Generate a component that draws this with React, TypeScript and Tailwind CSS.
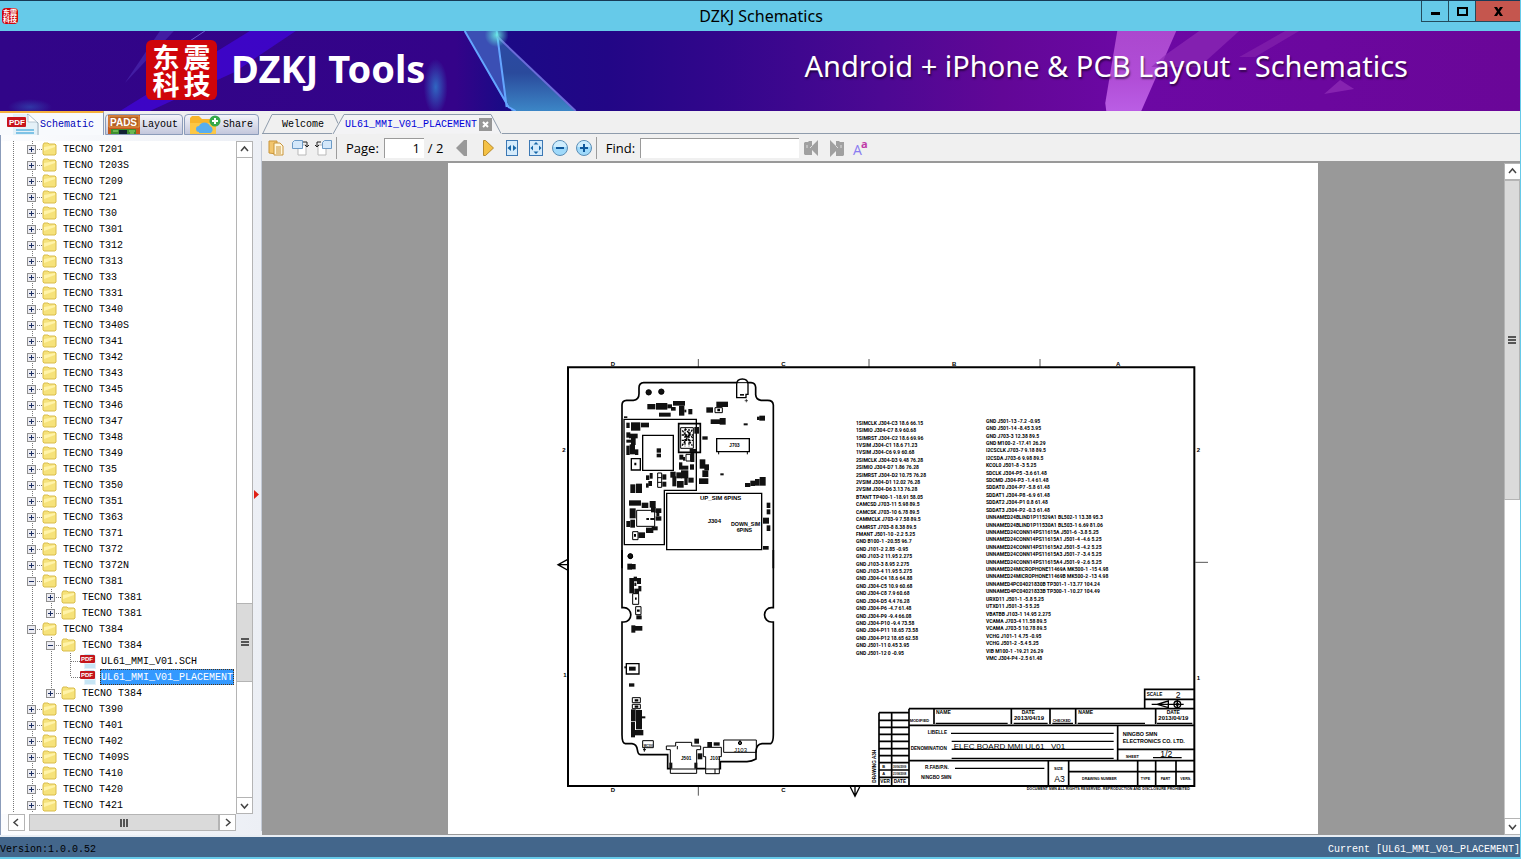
import { FC, ReactNode, useState } from 'react';
import clsx from 'clsx';

type Guide = 'blank' | 'line' | 'tee' | 'end' | 'plus' | 'plusEnd' | 'minus';

interface TreeRow {
  label: string;
  guides: Guide[];
  file?: boolean;
}

const folder = (label: string): TreeRow => ({ label: `TECNO ${label}`, guides: ['line', 'plus'] });

const rows: TreeRow[] = [
  ...[
    'T201', 'T203S', 'T209', 'T21', 'T30', 'T301', 'T312', 'T313', 'T33', 'T331', 'T340', 'T340S', 'T341', 'T342',
    'T343', 'T345', 'T346', 'T347', 'T348', 'T349', 'T35', 'T350', 'T351', 'T363', 'T371', 'T372', 'T372N',
  ].map(folder),
  { label: 'TECNO T381', guides: ['line', 'minus'] },
  { label: 'TECNO T381', guides: ['line', 'line', 'plus'] },
  { label: 'TECNO T381', guides: ['line', 'line', 'plusEnd'] },
  { label: 'TECNO T384', guides: ['line', 'minus'] },
  { label: 'TECNO T384', guides: ['line', 'line', 'minus'] },
  { label: 'UL61_MMI_V01.SCH', guides: ['line', 'line', 'line', 'tee'], file: true },
  { label: 'UL61_MMI_V01_PLACEMENT', guides: ['line', 'line', 'line', 'end'], file: true },
  { label: 'TECNO T384', guides: ['line', 'line', 'plusEnd'] },
  ...['T390', 'T401', 'T402', 'T409S', 'T410', 'T420', 'T421'].map(folder),
];

const netsLeft = [
  '1SIMCLK J304-C3 18.6 66.15', '1SIMIO J304-C7 8.9 60.68', '1SIMRST J304-C2 18.6 69.96', '1VSIM J304-C1 18.6 71.23',
  '1VSIM J304-C6 9.9 60.68', '2SIMCLK J304-D3 9.48 76.28', '2SIMIO J304-D7 1.86 76.28', '2SIMRST J304-D2 10.75 76.28',
  '2VSIM J304-D1 12.02 76.28', '2VSIM J304-D6 3.13 76.28', 'BTANT TP400-1 -18.91 58.05', 'CAMCSD J703-11 5.98 89.5',
  'CAMCSK J703-10 6.78 89.5', 'CAMMCLK J703-9 7.58 89.5', 'CAMRST J703-8 8.38 89.5', 'FMANT J501-10 -2.2 5.25',
  'GND B100-1 -20.55 96.7', 'GND J101-2 2.85 -0.95', 'GND J103-2 11.95 2.275', 'GND J103-3 8.95 2.275',
  'GND J103-4 11.95 5.275', 'GND J304-C4 18.6 64.88', 'GND J304-C5 10.9 60.68', 'GND J304-C8 7.9 60.68',
  'GND J304-D5 4.4 76.28', 'GND J304-P6 -4.7 61.48', 'GND J304-P9 -9.4 66.08', 'GND J304-P10 -9.4 73.58',
  'GND J304-P11 18.65 73.58', 'GND J304-P12 18.65 62.58', 'GND J501-11 0.45 3.95', 'GND J501-12 0 -0.95',
];

const netsRight = [
  'GND J501-13 -7.2 -0.95', 'GND J501-14 -8.45 3.95', 'GND J703-3 12.38 89.5', 'GND M100-2 -17.41 26.29',
  'I2CSCLK J703-7 9.18 89.5', 'I2CSDA J703-6 9.98 89.5', 'KCOL0 J501-8 -3 5.25', 'SDCLK J304-P5 -3.6 61.48',
  'SDCMD J304-P3 -1.4 61.48', 'SDDAT0 J304-P7 -5.8 61.48', 'SDDAT1 J304-P8 -6.9 61.48', 'SDDAT2 J304-P1 0.8 61.48',
  'SDDAT3 J304-P2 -0.3 61.48', 'UNNAMED24BLIND1P11529A1 BL502-1 13.38 95.3', 'UNNAMED24BLIND1P11530A1 BL503-1 6.69 81.06',
  'UNNAMED24CONN14PS11615A J501-6 -3.8 5.25', 'UNNAMED24CONN14PS11615A1 J501-4 -4.6 5.25',
  'UNNAMED24CONN14PS11615A2 J501-5 -4.2 5.25', 'UNNAMED24CONN14PS11615A3 J501-7 -3.4 5.25',
  'UNNAMED24CONN14PS11615A4 J501-9 -2.6 5.25', 'UNNAMED24MICROPHONE11469A MK500-1 -15 4.98',
  'UNNAMED24MICROPHONE11469B MK500-2 -13 4.98', 'UNNAMED4PC04021830B TP301-1 -13.77 104.24',
  'UNNAMED4PC04021833B TP300-1 -10.27 104.49', 'URXD11 J501-1 -5.8 5.25', 'UTXD11 J501-3 -5 5.25',
  'VBATBB J103-1 14.95 2.275', 'VCAMA J703-4 11.58 89.5', 'VCAMA J703-5 10.78 89.5', 'VCHG J101-1 4.75 -0.95',
  'VCHG J501-2 -5.4 5.25', 'VIB M100-1 -19.21 26.29', 'VMC J304-P4 -2.5 61.48',
];

// solid parts on the upper half of the board: x, y, width, height
const upperParts = [
  [277, 147, 24, 16], [303, 144, 34, 20], [337, 148, 14, 12], [354, 138, 36, 14], [348, 156, 14, 11], [372, 152, 16, 30],
  [388, 164, 6, 8], [400, 162, 12, 16], [312, 173, 35, 12], [454, 157, 20, 16], [484, 140, 35, 16], [467, 193, 30, 14],
  [494, 189, 18, 20], [566, 205, 12, 6], [606, 185, 8, 10], [613, 182, 17, 15], [207, 184, 10, 5],
  [214, 203, 10, 16], [228, 202, 28, 25], [258, 203, 24, 14], [214, 232, 12, 16], [222, 236, 26, 14], [228, 248, 14, 22],
  [214, 254, 18, 9], [224, 268, 16, 30], [240, 283, 10, 17], [214, 272, 10, 28],
  [442, 244, 16, 10], [305, 280, 13, 13], [305, 296, 13, 11], [418, 216, 14, 20], [404, 282, 20, 10],
  [373, 299, 12, 15], [384, 306, 6, 11], [406, 294, 12, 27], [434, 313, 17, 28], [448, 328, 14, 18], [442, 346, 18, 20],
  [432, 370, 28, 17], [405, 328, 12, 16], [372, 322, 10, 22], [380, 332, 20, 12], [346, 350, 16, 18], [352, 364, 12, 30],
  [364, 352, 16, 18], [378, 346, 22, 24], [388, 366, 10, 24], [400, 368, 16, 15], [366, 378, 20, 20], [496, 355, 10, 6],
  [284, 354, 9, 17], [273, 361, 10, 14], [280, 378, 11, 15], [273, 385, 8, 13], [322, 358, 12, 16], [322, 380, 12, 15],
  [226, 388, 15, 26], [243, 386, 18, 28], [222, 436, 36, 16], [284, 438, 18, 20], [260, 443, 20, 16], [288, 456, 14, 16],
  [224, 460, 18, 30], [302, 460, 17, 14], [304, 472, 9, 12], [302, 484, 17, 13], [214, 498, 12, 18], [226, 494, 14, 24],
  [273, 518, 22, 16], [290, 514, 18, 12], [250, 532, 20, 17], [274, 489, 8, 6], [286, 489, 12, 6],
  [570, 384, 16, 12], [586, 377, 14, 16], [600, 372, 14, 20], [614, 366, 18, 26],
  [635, 443, 11, 16], [635, 463, 11, 15], [624, 488, 18, 18], [635, 511, 11, 17], [624, 573, 17, 11], [555, 117, 12, 5],
];

// solid parts down the left edge of the lower half
const lowerParts = [
  [217, 41, 14, 18], [230, 42, 12, 16], [223, 84, 14, 46], [236, 80, 10, 14], [246, 84, 12, 12], [238, 116, 14, 16],
  [246, 92, 12, 10], [238, 98, 6, 10], [250, 108, 9, 16], [244, 196, 16, 12], [229, 226, 12, 22], [240, 228, 22, 14],
  [222, 350, 20, 12], [222, 400, 16, 10], [228, 478, 14, 36], [243, 480, 18, 58], [228, 516, 12, 46], [238, 540, 27, 16],
  [260, 499, 11, 6], [418, 566, 14, 15], [457, 576, 14, 15], [476, 577, 18, 10], [428, 610, 14, 18], [343, 638, 9, 18],
  [418, 638, 9, 18], [208, 349, 6, 6],
];

const FolderIcon: FC = () => (
  <svg width="15" height="14" viewBox="0 0 15 14" className="shrink-0">
    <path d="M1 3l1-2h4l1 1h6l1 1v9l-1 1H2l-1-1z" fill="#f6e27a" stroke="#d9bd4c" strokeWidth="1" />
    <path d="M2 5l6-1 5-1v2L2 9z" fill="#fff3a8" />
  </svg>
);

const PdfIcon: FC = () => (
  <svg width="17" height="16" viewBox="0 0 17 16" className="shrink-0">
    <path d="M4 1h9l3 2v13H4z" fill="#e3f1fa" />
    <path d="M5 12h10M5 14h10M5 2h9" stroke="#a9d8ee" />
    <rect x="0" y="2" width="15" height="8" rx="1" fill="#c4161c" />
    <text x="1" y="8" fontSize="6" fontWeight="bold" fontFamily="Liberation Sans, sans-serif" fill="#fff">PDF</text>
  </svg>
);

const GuideCell: FC<{ kind: Guide }> = ({ kind }) => {
  const box = kind === 'plus' || kind === 'plusEnd' || kind === 'minus';
  const half = kind === 'end' || kind === 'plusEnd';
  return (
    <svg width="19" height="16" viewBox="0 0 19 16" className="shrink-0" shapeRendering="crispEdges">
      {kind !== 'blank' && (
        <path d={half ? 'M9.5 0V8' : 'M9.5 0V16'} stroke="#777" strokeDasharray="1 1" />
      )}
      {kind !== 'line' && kind !== 'blank' && <path d="M10 8.5H19" stroke="#777" strokeDasharray="1 1" />}
      {box && (
        <>
          <rect x="4.5" y="4.5" width="8" height="8" fill="#ececf2" stroke="#8f8f8f" />
          <path d={kind === 'minus' ? 'M6 8.5h5' : 'M6 8.5h5M8.5 6v5'} stroke="#1c2f63" />
        </>
      )}
    </svg>
  );
};

const Arrow: FC<{ d: string }> = ({ d }) => (
  <svg width="9" height="9" viewBox="0 0 9 9" fill="none" stroke="#444" strokeWidth="1.5">
    <path d={d} />
  </svg>
);

const ScrollButton: FC<{ label: string; d: string }> = ({ label, d }) => (
  <button aria-label={label} className="flex size-[17px] shrink-0 items-center justify-center border border-[#b4b4b4] bg-white">
    <Arrow d={d} />
  </button>
);

const UP = 'M1 6l3.500-4L8 6';
const DOWN = 'M1 3l3.500 4L8 3';
const LEFT = 'M6 1L2 4.500 6 8';
const RIGHT = 'M3 1l4 3.500L3 8';

const Grip: FC<{ vertical?: boolean }> = ({ vertical }) => (
  <svg width="8" height="8" viewBox="0 0 8 8" fill="#555" shapeRendering="crispEdges">
    <path d={vertical ? 'M0 0h8v2H0zM0 3h8v2H0zM0 6h8v2H0z' : 'M0 0h2v8H0zM3 0h2v8H3zM6 0h2v8H6z'} />
  </svg>
);

const ToolButton: FC<{ label: string; children: ReactNode }> = ({ label, children }) => (
  <button aria-label={label} className="flex w-6 shrink-0 items-center justify-center">
    <svg width="18" height="18" viewBox="0 0 18 18" fill="none" className="overflow-visible">
      {children}
    </svg>
  </button>
);

const TitleBar: FC = () => (
  <header className="flex h-[31px] shrink-0 border-t border-[#173a56] bg-[#66cae9]">
    <div className="flex flex-1 items-center pl-0.5">
      <div className="flex size-4 flex-col items-center justify-center rounded-sm bg-[#d0050b] font-['Noto_Sans_CJK_SC',sans-serif] text-[7px] leading-[7px] font-bold text-white">
        <span>东震</span>
        <span>科技</span>
      </div>
    </div>
    <h1 className="self-center font-['Noto_Sans',sans-serif] text-base text-black">DZKJ Schematics</h1>
    <div className="flex flex-1 items-start justify-end">
      <button aria-label="Minimize" className="flex h-[21px] w-7 items-center justify-center border border-t-0 border-[#234a5c]">
        <svg width="11" height="10" viewBox="0 0 11 10"><path d="M1 6h9v3H1z" /></svg>
      </button>
      <button aria-label="Maximize" className="flex h-[21px] w-[27px] items-center justify-center border-r border-b border-[#234a5c]">
        <svg width="11" height="9" viewBox="0 0 11 9"><path d="M1 1h9v7H1z" fill="none" stroke="#000" strokeWidth="2" /></svg>
      </button>
      <button aria-label="Close" className="flex h-[21px] w-11 items-center justify-center border-b border-[#234a5c] bg-[#c5564e]">
        <svg width="9" height="9" viewBox="0 0 9 9"><path d="M0 0h3l1.500 2.500L6 0h3L6 4.500 9 9H6L4.500 6.500 3 9H0l3-4.500z" /></svg>
      </button>
    </div>
  </header>
);

const Banner: FC = () => (
  <div className="relative flex h-20 shrink-0 items-center overflow-hidden bg-[#310489]">
    <svg className="absolute inset-0 size-full" viewBox="0 0 1521 80" preserveAspectRatio="none">
      <defs>
        <linearGradient id="sky">
          <stop offset="0" stopColor="#310588" />
          <stop offset=".3" stopColor="#340389" />
          <stop offset=".33" stopColor="#1b0a86" />
          <stop offset=".4" stopColor="#220686" />
          <stop offset=".47" stopColor="#31068b" />
          <stop offset=".58" stopColor="#4c0893" />
          <stop offset=".66" stopColor="#620797" />
          <stop offset=".74" stopColor="#6c08a4" />
          <stop offset="1" stopColor="#6a0698" />
        </linearGradient>
        <linearGradient id="shard" x1="0" y1="0" x2="0" y2="1">
          <stop offset="0" stopColor="#2c4aa6" />
          <stop offset=".5" stopColor="#2a4a9c" />
          <stop offset="1" stopColor="#3c86c6" />
        </linearGradient>
        <linearGradient id="ray" x1="0" y1="0" x2="0" y2="1">
          <stop offset="0" stopColor="#b653d6" />
          <stop offset=".6" stopColor="#bd5ae0" />
          <stop offset="1" stopColor="#c86df0" />
        </linearGradient>
        <radialGradient id="glow">
          <stop offset="0" stopColor="#2f7fd0" stopOpacity=".8" />
          <stop offset="1" stopColor="#2f7fd0" stopOpacity="0" />
        </radialGradient>
        <radialGradient id="spark">
          <stop offset="0" stopColor="#6df0e4" stopOpacity=".9" />
          <stop offset="1" stopColor="#5be0dd" stopOpacity="0" />
        </radialGradient>
      </defs>
      <path d="M0 0h1521v80H0z" fill="url(#sky)" />
      <path d="M250 0h46L235 41 150 80h-30z" fill="#4206e0" opacity=".7" />
      <path d="M160 0h14L125 52z" fill="#5236bd" opacity=".5" />
      <path d="M205 0L178 18" stroke="#6a55cf" />
      <ellipse cx="436" cy="56" rx="12" ry="28" fill="url(#glow)" />
      <ellipse cx="30" cy="76" rx="22" ry="8" fill="url(#glow)" opacity=".5" />
      <path d="M465 0h32l12 78z" fill="#3b4fb4" />
      <path d="M497 4l79 76h-64l-6-12z" fill="url(#shard)" />
      <path d="M465 0l44 76 7 4M497 0l10 76" fill="none" stroke="#64a5ff" strokeWidth="2" />
      <path d="M497 5l79 75" stroke="#6a6bd8" strokeWidth="2" />
      <circle cx="497" cy="4" r="12" fill="url(#spark)" />
      <path d="M1118 0h59l-35 80h-35l-1-8z" fill="url(#ray)" opacity=".85" />
      <path d="M1200 0h40l-40 36h-48l14-12z" fill="#8d2bb6" opacity=".7" />
      <path d="M1286 0h14l-44 26h-16z" fill="#8322ad" opacity=".7" />
      <path d="M1341 49l14 9-30 5z" fill="#9837bd" opacity=".6" />
    </svg>
    <div className="relative flex flex-1 items-center justify-between pr-28 pb-0.5 pl-[146px]">
      <div className="flex items-center">
        <div className="flex h-[60px] w-[71px] flex-col items-center justify-center rounded-md bg-[#cf050a] font-['Noto_Sans_CJK_SC',sans-serif] text-[27px] leading-[27px] font-bold text-white">
          <div className="flex gap-1">
            <span>东</span>
            <span>震</span>
          </div>
          <div className="flex gap-1">
            <span>科</span>
            <span>技</span>
          </div>
        </div>
        <span className="ml-3.5 pb-1 font-['Noto_Sans',sans-serif] text-[38px] leading-[54px] font-bold text-white">DZKJ Tools</span>
      </div>
      <span className="pb-2 font-['Noto_Sans',sans-serif] text-[29px] text-white [text-shadow:1px_2px_2px_#0008]">
        Android + iPhone &amp; PCB Layout - Schematics
      </span>
    </div>
  </div>
);

const SideTabs: FC = () => {
  const tab = 'flex h-[21px] items-center overflow-hidden rounded-t-sm border border-[#8b9cba] bg-linear-to-b from-[#f4f5fa] to-[#c3c7dc]';
  return (
    <div className="flex items-end gap-px">
      <button className="flex h-6 w-[104px] items-center overflow-hidden border-t-2 border-r border-t-[#f5b03c] border-r-[#8b9cba] bg-[#f8fafd] pl-1.5 text-[#0000b8]">
        <svg width="34" height="22" viewBox="0 0 34 22" className="shrink-0">
          <path d="M7 1h16l8 9v12H7z" fill="#e4f1f8" />
          <path d="M21 1l11 9v12" fill="none" stroke="#8aa5b5" />
          <path d="M22 1v8h9z" fill="#fff" stroke="#b8c8d2" />
          <path d="M10 17h18M10 20h18" stroke="#7fc3e6" strokeWidth="2" />
          <rect x="1" y="4" width="19" height="10" rx="1" fill="#c8141b" />
          <text x="3" y="12" fontSize="8" fontWeight="bold" fontFamily="Liberation Sans, sans-serif" fill="#fff">PDF</text>
        </svg>
        Schematic
      </button>
      <button className={clsx(tab, 'w-[78px] gap-0.5 pl-0.5')}>
        <svg width="32" height="20" viewBox="0 0 32 20" className="shrink-0">
          <path d="M0 0h32v20H0z" fill="#c55a1e" />
          <path d="M1 1h30v11H1z" fill="#b55f22" stroke="#e59a4f" />
          <text x="2" y="11" fontSize="10" fontWeight="bold" fontFamily="Liberation Sans, sans-serif" fill="#fff">PADS</text>
          <path d="M3 14h25v6H3z" fill="#3d8f2c" />
          <path d="M11 15h8v5h-8z" fill="#123" />
          <path d="M5 16h5M21 16h6M22 18h4" stroke="#9be07d" />
        </svg>
        Layout
      </button>
      <button className={clsx(tab, 'w-[75px] gap-0.5 pl-1')}>
        <svg width="32" height="20" viewBox="0 0 32 20" className="shrink-0">
          <path d="M1 3l2-2h7l3 3h13v16H1z" fill="#f7b52b" />
          <path d="M1 8h26v12H1z" fill="#fcc744" />
          <path d="M10 17a3 3 0 010-6 6 6 0 0111 0 4 4 0 011 7H10z" fill="#57aef0" />
          <circle cx="26" cy="6" r="5.500" fill="#35a94a" />
          <path d="M26 3v6M23 6h6" stroke="#fff" strokeWidth="2" />
        </svg>
        Share
      </button>
    </div>
  );
};

const FileTree: FC = () => {
  const [selected, setSelected] = useState('UL61_MMI_V01_PLACEMENT');
  return (
    <ul className="min-h-0 flex-1 overflow-hidden bg-white">
      {rows.map((row, i) => (
        <li key={i}>
          <button onClick={() => setSelected(row.label)} className="flex h-4 items-center pl-[3px] whitespace-nowrap">
            {row.guides.map((kind, n) => (
              <GuideCell key={n} kind={kind} />
            ))}
            {row.file ? <PdfIcon /> : <FolderIcon />}
            <span
              className={clsx(
                'h-4 px-px pt-px leading-4',
                row.file ? 'ml-[3px]' : 'ml-[5px]',
                row.label === selected && 'bg-[#3399ff] text-white outline-1 -outline-offset-1 outline-dotted outline-[#553311]',
              )}
            >
              {row.label}
            </span>
          </button>
        </li>
      ))}
    </ul>
  );
};

const Sidebar: FC = () => (
  <aside className="flex w-[262px] shrink-0 flex-col bg-[#f0f0f0]">
    <SideTabs />
    <div className="flex min-h-0 flex-1 border-l border-[#8b9cba] bg-linear-to-r from-[#fbfcfe] to-[#eceff5] pt-1.5 pb-1">
      <div className="flex min-w-0 flex-1 flex-col">
        <FileTree />
        <div className="ml-[7px] flex h-[17px] bg-white">
          <ScrollButton label="Scroll left" d={LEFT} />
          <div className="ml-1 flex flex-1 items-center justify-center border border-[#b4b4b4] bg-[#dadada]">
            <Grip />
          </div>
          <ScrollButton label="Scroll right" d={RIGHT} />
        </div>
      </div>
      <div className="mb-[17px] flex w-[17px] flex-col bg-white">
        <ScrollButton label="Scroll up" d={UP} />
        <div className="grow-[448] basis-0 border-x border-[#b4b4b4]" />
        <div className="flex grow-[77] basis-0 items-center justify-center border border-[#b4b4b4] bg-[#dadada]">
          <Grip vertical />
        </div>
        <div className="grow-[116] basis-0 border-x border-[#b4b4b4]" />
        <ScrollButton label="Scroll down" d={DOWN} />
      </div>
      <div className="flex w-[9px] items-center border-r border-[#c3cad6] pt-4 pl-px">
        <svg width="5" height="9" viewBox="0 0 5 9"><path d="M0 0l5 4.500L0 9z" fill="#e02015" /></svg>
      </div>
    </div>
  </aside>
);

const DocTabs: FC = () => (
  <div className="flex h-[23px] shrink-0 items-end">
    <button className="relative flex h-5 w-[70px] items-center border-b border-[#8f9cac] pl-5 text-black">
      <svg className="absolute inset-0" width="78" height="20" viewBox="0 0 78 20" fill="none" stroke="#8f9cac">
        <path d="M1 19L10 .5h62l4 9" />
      </svg>
      <span className="relative pt-px">Welcome</span>
    </button>
    <div className="relative flex h-5 w-[170px] items-center pl-[13px]">
      <svg className="absolute inset-0" width="170" height="20" viewBox="0 0 170 20" fill="#f3f3f5" stroke="#8f9cac">
        <path d="M1 20L12 .5h147l10 19" />
      </svg>
      <button className="relative pt-px text-[#0000d8]">UL61_MMI_V01_PLACEMENT</button>
      <button aria-label="Close tab" className="relative ml-0.5 flex size-[13px] items-center justify-center bg-[#969696]">
        <svg width="7" height="7" viewBox="0 0 7 7" stroke="#fff" strokeWidth="2"><path d="M1 1l5 5M6 1L1 6" /></svg>
      </button>
    </div>
    <div className="h-full flex-1 border-b border-[#8f9cac]" />
  </div>
);

const Toolbar: FC = () => (
  <div className="flex h-[29px] shrink-0 items-center border-b-2 border-[#999] pl-0.5 font-['Open_Sans',sans-serif] text-[13px] text-black">
    <ToolButton label="Copy page">
      <path d="M2 2h8v13l-8-1z" fill="#f2c56c" stroke="#c9953a" />
      <path d="M7 4h6l3 3v9H7z" fill="#fff7dd" stroke="#c9953a" />
      <path d="M9 8h5M9 10h5M9 12h5M9 14h5" stroke="#c9953a" />
    </ToolButton>
    <ToolButton label="Rotate left">
      <path d="M7 6h8v10H7z" fill="#fff" stroke="#b9b9b9" />
      <path d="M1.500 3.500l2-2h8v8h-10z" fill="#d4e8fa" stroke="#6d9bc6" />
      <path d="M12 3h4v5M14 6l2 2 2-2" stroke="#222" />
    </ToolButton>
    <ToolButton label="Rotate right">
      <path d="M3 6h8v10H3z" fill="#fff" stroke="#b9b9b9" />
      <path d="M7.500 3.500l2-2h7v8h-9z" fill="#d4e8fa" stroke="#6d9bc6" />
      <path d="M6 3H2v5M0 6l2 2 2-2" stroke="#222" />
    </ToolButton>
    <div className="h-[22px] w-px bg-[#9c9c9c]" />
    <label htmlFor="page" className="ml-[9px] pt-0.5">Page:</label>
    <input
      id="page"
      defaultValue="1"
      className="ml-[5px] h-5 w-10 border-t border-l border-[#9a9a9a] bg-white pr-1 text-right outline-none"
    />
    <span className="ml-1 w-[22px] pt-0.5 whitespace-nowrap">/ 2</span>
    <ToolButton label="Previous page">
      <path d="M14 1v16h-3L3 9l8-8z" fill="#999" />
    </ToolButton>
    <div className="w-0.5" />
    <ToolButton label="Next page">
      <path d="M4.500 1.500v15h2l8-7.500-8-7.500z" fill="#f4c145" stroke="#b78a2c" />
    </ToolButton>
    <ToolButton label="Fit width">
      <rect x="3.500" y="1.500" width="11" height="15" fill="#d5ebfb" stroke="#3c78b4" />
      <path d="M8 6v6L4.500 9zM10 6v6l3.500-3z" fill="#1767a8" />
    </ToolButton>
    <ToolButton label="Fit page">
      <rect x="2.500" y="1.500" width="13" height="15" fill="#d5ebfb" stroke="#3c78b4" />
      <path d="M9 3l2.500 2.500h-5zM9 15l2.500-2.500h-5zM3.500 9L6 6.500v5zM14.500 9L12 6.500v5z" fill="#1767a8" />
    </ToolButton>
    <ToolButton label="Zoom out">
      <circle cx="9" cy="9" r="7.500" fill="#9fd9fa" stroke="#5b8db5" />
      <path d="M2.500 8a6.500 6 0 0113 0z" fill="#cfedfd" />
      <path d="M5 9h8" stroke="#10599c" strokeWidth="2" />
    </ToolButton>
    <ToolButton label="Zoom in">
      <circle cx="9" cy="9" r="7.500" fill="#9fd9fa" stroke="#5b8db5" />
      <path d="M2.500 8a6.500 6 0 0113 0z" fill="#cfedfd" />
      <path d="M5 9h8M9 5v8" stroke="#10599c" strokeWidth="2" />
    </ToolButton>
    <div className="h-[22px] w-px bg-[#9c9c9c]" />
    <label htmlFor="find" className="ml-[9px] pt-0.5">Find:</label>
    <input id="find" className="ml-[5px] h-5 w-[159px] border-t border-l border-[#9a9a9a] bg-white px-1 outline-none" />
    <ToolButton label="Find previous">
      <path d="M3 3h3l1-1h3v5l6-6v16l-6-6v5H3l-1-1V4z" fill="#a0a0a0" />
      <path d="M5 6v3M8 9l2-2" stroke="#ddd" />
    </ToolButton>
    <div className="w-0.5" />
    <ToolButton label="Find next">
      <path d="M2 1l6 6V2h3l1 1h4v13l-1 1H8v-5l-6 6z" fill="#a0a0a0" />
      <path d="M13 6v3M10 9L8 7" stroke="#ddd" />
    </ToolButton>
    <ToolButton label="Match case">
      <text x="1" y="16" fontSize="14" fontFamily="Open Sans, sans-serif" fill="#8a7cf0">A</text>
      <text x="9" y="9" fontSize="11" fontWeight="bold" fontFamily="Open Sans, sans-serif" fill="#c03aa8">a</text>
    </ToolButton>
  </div>
);

const Parts: FC<{ list: number[][] }> = ({ list }) => (
  <>
    {list.map(([x, y, w, h], i) => (
      <rect key={i} x={x} y={y} width={w} height={h} fill="#111" stroke="none" />
    ))}
  </>
);

const Label: FC<{ x: number; y: number; size?: number; bold?: boolean; children: ReactNode }> = ({ x, y, size = 15, bold, children }) => (
  <text x={x} y={y} fontSize={size} fontWeight={bold ? 'bold' : 'normal'} fill="#000" stroke="none" xmlSpace="preserve">
    {children}
  </text>
);

const NetList: FC<{ x: number; y: number; nets: string[] }> = ({ x, y, nets }) => (
  <g fontFamily="Roboto, Liberation Sans, sans-serif">
    {nets.map((net, i) => (
      <Label key={net} x={x} y={y + i * 22.25} size={15} bold>
        {net}
      </Label>
    ))}
  </g>
);

const BoardTop: FC = () => (
  <g transform="translate(321 576)">
    <path
      d="M201 640V150q0-13 14-14h20q17-2 17-20V98q0-14 14-15h322q13 1 14 14v22q1 15 16 17h20q16 0 17 14v490"
      strokeWidth="5"
    />
    <path d="M545 128V88q0-16 17-16t17 16v30h-6v10z" strokeWidth="4" fill="#fff" />
    <path d="M545 83h34" />
    <path d="M569 137h10M574 132v10" strokeWidth="2" />
    <circle cx="281" cy="112" r="8" fill="#111" />
    <circle cx="319" cy="110" r="8" fill="#111" />
    <circle cx="226" cy="604" r="7" fill="#111" />
    <path d="M207 193h217v213H328v163H208z" strokeWidth="4" />
    <path d="M335 415h285v169H335z" strokeWidth="4" />
    <path d="M263 241h92v105h-92zM229 311h27v34h-27zM485 251h98v39h-98z" strokeWidth="4" />
    <path d="M491 290v8M577 290v8M480 158h22v15h-22z" />
    <path d="M371 206h65v86h-65z" strokeWidth="5" />
    <path d="M377 218h38v62h-38z" />
    <path d="M382 226l30 46M390 220l24 30M412 224l-32 50M380 240h34M380 256h34M390 222v52M402 222v52" strokeWidth="4" strokeDasharray="7 3" />
    <path d="M245 466h54v48h-54zM233 530h16v24h-16zM308 354h12v43h-12zM308 368h12M308 382h12M393 298h14v20h-14z" />
    <path d="M238 327h6M487 165h8M237 541h6" strokeWidth="8" />
    <Parts list={upperParts} />
    <Label x={435} y={434} size={18} bold>UP_SIM 6PINS</Label>
    <Label x={458} y={504} size={18} bold>J304</Label>
    <Label x={528} y={513} size={16} bold>DOWN_SIM</Label>
    <Label x={545} y={532} size={16} bold>6PINS</Label>
    <Label x={523} y={277} size={14} bold>J703</Label>
  </g>
);

const BoardBottom: FC = () => (
  <g transform="translate(321 1161)">
    <path
      d="M201 0v173h6a20 21 0 010 43h-6v338q0 26 10 27h20q14 2 16 18 2 15 9 15h82v42h158v-21h80q14-1 27-8v-25q2-19 18-21h26q8-4 8-27V216h-6a20 21 0 010-43h6V0"
      strokeWidth="5"
    />
    <circle cx="226" cy="18" r="7" fill="#111" />
    <path d="M233 131h18v32h-18zM242 170h16v24h-16zM232 443h24v15h-24zM232 463h24v13h-24z" />
    <path d="M214 341h38v31h-38z" strokeWidth="4" />
    <path d="M263 572h32v21h-32zM268 593v12M264 599h9" />
    <path d="M334 588h28v-11h48v11h27v11h-12v71h-79v-71h-12z" fill="#fff" />
    <path d="M345 657h80M367 588v10" />
    <path d="M445 592h54v28h-6v51h-41v-51h-7zM452 657h41M480 657v14" fill="#fff" />
    <path d="M506 570h98v37h-98zM555 570v14M549 579h12" />
    <circle cx="555" cy="579" r="5" />
    <path d="M240 146h5M246 182h8M239 451h11M239 470h11" strokeWidth="7" />
    <Parts list={lowerParts} />
    <Label x={537} y={606} size={18}>J103</Label>
    <Label x={378} y={631} size={14} bold>J501</Label>
    <Label x={465} y={629} size={14} bold>J101</Label>
    <Label x={266} y={590} size={8} bold>MIC500</Label>
  </g>
);

const TitleBlock: FC = () => (
  <g transform="translate(1251 1551)">
    <path
      strokeWidth="5"
      d="M989 28H839v58M839 58h150M132 86h857M132 86v229M132 136h857M132 242h857M42 98h90M42 98v217M80 98v217M42 121h90M42 142h90M42 163h90M42 184h90M42 206h90M42 227h90M42 248h90M42 270h90M42 292h90M207 86v46M439 86v46M555 86v46M632 86v46M872 86v46M758 136v106M758 208h231M550 242v73M611 242v73M611 275h378M818 242v73M872 242v73M933 242v73"
    />
    <path strokeWidth="4" d="M212 130h216M446 130h102M562 130h62M638 130h202M876 130h106M258 160h488M260 184h486M260 208h486M260 235h486M270 265h268M864 233h86" />
    <path d="M876 73l34-10v20zM860 73h96M937 60v27" strokeWidth="4" />
    <circle cx="937" cy="73" r="10" strokeWidth="4" />
    <circle cx="937" cy="73" r="4" />
    <Label x={845} y={49} size={14} bold>SCALE</Label>
    <Label x={932} y={53} size={26}>2</Label>
    <Label x={213} y={101} bold>NAME</Label>
    <Label x={470} y={102} bold>DATE</Label>
    <Label x={447} y={120} size={18} bold>2013/04/19</Label>
    <Label x={134} y={126} size={12} bold>MODIFIED</Label>
    <Label x={563} y={125} size={11} bold>CHECKED</Label>
    <Label x={640} y={101} bold>NAME</Label>
    <Label x={905} y={102} bold>DATE</Label>
    <Label x={880} y={120} size={18} bold>2013/04/19</Label>
    <Label x={188} y={162} size={14} bold>LIBELLE</Label>
    <Label x={137} y={210} size={14} bold>DENOMINATION</Label>
    <Label x={266} y={206} size={24}>{'ELEC BOARD MMI UL61   V01'}</Label>
    <Label x={773} y={167} size={16} bold>NINGBO SMN</Label>
    <Label x={773} y={189} size={16} bold>ELECTRONICS CO. LTD.</Label>
    <Label x={782} y={233} size={12} bold>SHEET</Label>
    <Label x={886} y={230} size={26}>1/2</Label>
    <Label x={180} y={266} size={14} bold>R.FAB/P.N.</Label>
    <Label x={168} y={296} size={14} bold>NINGBO SMN</Label>
    <Label x={567} y={270} size={12} bold>SIZE</Label>
    <Label x={568} y={305} size={26}>A3</Label>
    <Label x={651} y={300} size={11} bold>DRAWING NUMBER</Label>
    <Label x={827} y={301} size={11} bold>TYPE</Label>
    <Label x={887} y={301} size={11} bold>PART</Label>
    <Label x={946} y={301} size={11} bold>VERS.</Label>
    <Label x={52} y={263} size={12} bold>B</Label>
    <Label x={52} y={285} size={12} bold>A</Label>
    <Label x={84} y={263} size={8} bold>30/06/2009</Label>
    <Label x={84} y={285} size={8} bold>21/08/2008</Label>
    <Label x={46} y={308} size={14} bold>VER</Label>
    <Label x={86} y={308} size={14} bold>DATE</Label>
    <g transform="rotate(-90 34 308)">
      <Label x={34} y={308} size={14} bold>DRAWING A3H</Label>
    </g>
    <Label x={485} y={330} size={11} bold>DOCUMENT SMN ALL RIGHTS RESERVED. REPRODUCTION AND DISCLOSURE PROHIBITED</Label>
  </g>
);

const Sheet: FC = () => (
  <svg
    width="870"
    height="671"
    viewBox="0 0 2610 2013"
    className="shrink-0 bg-white"
    fill="none"
    stroke="#000"
    strokeWidth="3"
    fontFamily="Liberation Sans, sans-serif"
  >
    <path d="M360 613h1879v1256H360z" strokeWidth="6" />
    <path d="M751 588v25M1263 588v25M1776 588v25M751 1872v26M2242 1198h38" strokeWidth="2" />
    <path d="M358 1190l-28 15 28 16M330 1205h28M1207 1872l14 28 14-28M1221 1872v28" strokeWidth="4" />
    {['D', 'C', 'B', 'A'].map((zone, i) => (
      <Label key={zone} x={[488, 1000, 1512, 2004][i]} y={608} size={18} bold>{zone}</Label>
    ))}
    <Label x={488} y={1888} size={18} bold>D</Label>
    <Label x={1000} y={1888} size={18} bold>C</Label>
    <Label x={343} y={868} size={18} bold>2</Label>
    <Label x={346} y={1543} size={18} bold>1</Label>
    <Label x={2246} y={868} size={18} bold>2</Label>
    <Label x={2246} y={1551} size={18} bold>1</Label>
    <BoardTop />
    <BoardBottom />
    <NetList x={1224} y={785} nets={netsLeft} />
    <NetList x={1614} y={779} nets={netsRight} />
    <TitleBlock />
  </svg>
);

const Viewer: FC = () => (
  <main className="flex min-w-0 flex-1 flex-col bg-[#f0f0f0]">
    <DocTabs />
    <Toolbar />
    <div className="flex min-h-0 flex-1">
      <div className="flex min-w-0 flex-1 items-start justify-center overflow-hidden bg-[#999]">
        <Sheet />
      </div>
      <div className="flex w-4 shrink-0 flex-col overflow-hidden bg-white">
        <ScrollButton label="Page up" d={UP} />
        <div className="flex flex-1 items-center justify-center border border-[#b4b4b4] bg-[#dadada]">
          <Grip vertical />
        </div>
        <div className="flex-1 border-l border-[#c8c8c8]" />
        <ScrollButton label="Page down" d={DOWN} />
      </div>
    </div>
  </main>
);

export default function App() {
  return (
    <div className="flex h-screen flex-col overflow-hidden border-r border-b-2 border-[#66cae9] bg-[#f0f0f0] font-['Liberation_Mono',monospace] text-[10px] text-black">
      <TitleBar />
      <Banner />
      <div className="flex min-h-0 flex-1 border-b-2 border-[#e9eef4]">
        <Sidebar />
        <Viewer />
      </div>
      <footer className="flex h-5 shrink-0 items-center justify-between bg-[#43668b] pt-1.5 leading-4">
        <span>Version:1.0.0.52</span>
        <span className="text-white">Current [UL61_MMI_V01_PLACEMENT]</span>
      </footer>
    </div>
  );
}
